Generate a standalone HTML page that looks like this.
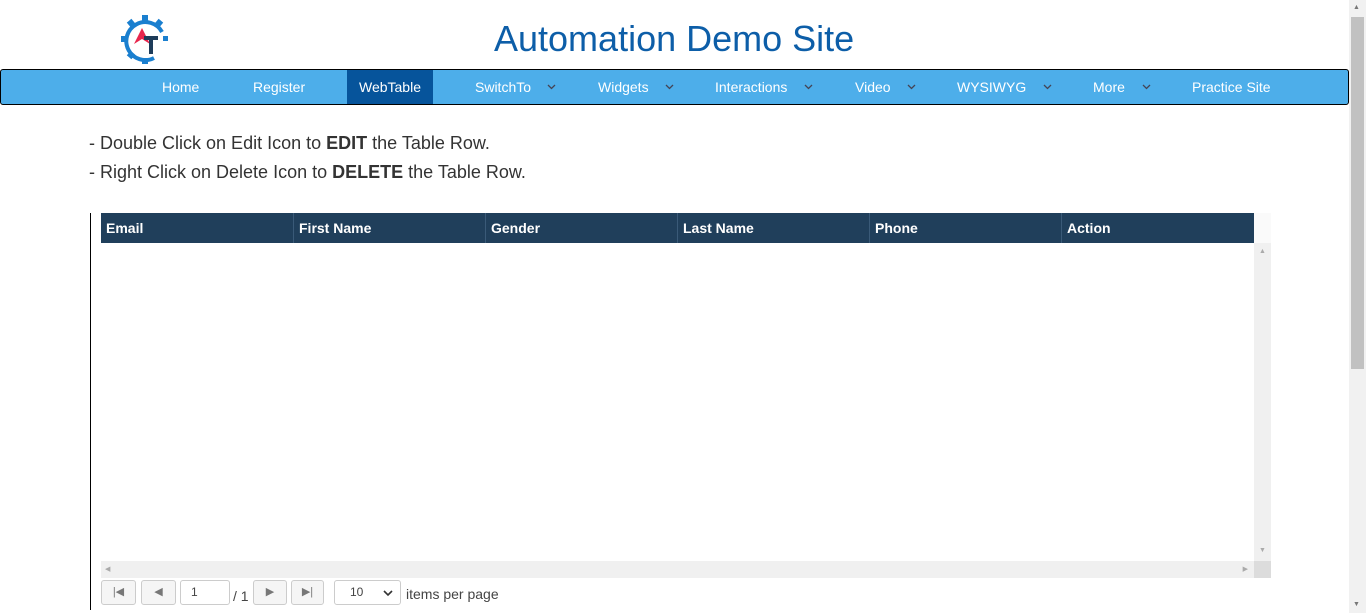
<!DOCTYPE html>
<html><head><style>
body{margin:0;width:1366px;height:613px;overflow:hidden;font-family:"Liberation Sans",sans-serif;background:#fff;position:relative}
.a{position:absolute}
.nav{left:0;top:69px;width:1347px;height:34px;background:#4daeea;border:1px solid #000;border-radius:3px}
.ni{position:absolute;top:0;height:34px;line-height:34px;color:#fff;font-size:14px}
.ch{position:absolute;top:14px}
.th{position:absolute;top:213px;height:30px;line-height:30px;color:#fff;font-weight:bold;font-size:14px;padding-left:5px;box-sizing:border-box;border-left:1px solid #3a5a78}
.btn{position:absolute;top:580px;height:25px;border:1px solid #ccc;border-radius:3px;background:#f5f5f5;box-sizing:border-box;color:#777;font-size:11px;text-align:center;line-height:23px}
</style></head><body>
<svg class="a" style="left:120px;top:14px" width="50" height="52" viewBox="0 0 50 52">
<g fill="none" stroke="#1a7fcf" stroke-width="4"><path d="M34 44 A19 19 0 1 1 42 18"/></g>
<g fill="#1a7fcf"><rect x="22" y="1" width="6" height="6"/><rect x="8" y="6" width="6" height="6" transform="rotate(-40 11 9)"/><rect x="36" y="6" width="6" height="6" transform="rotate(40 39 9)"/><rect x="1" y="22" width="6" height="6"/><rect x="8" y="38" width="6" height="6" transform="rotate(40 11 41)"/><rect x="22" y="44" width="6" height="6"/><rect x="43" y="22" width="5" height="5"/></g>
<path d="M14 30 L22 14 L30 30 L22 25Z" fill="#e8264d"/>
<path d="M24 22 H38 V26 H33 V40 H29 V26 H24Z" fill="#1e3c5a"/>
</svg>
<div class="a" style="left:494px;top:18px;font-size:36px;color:#0d5ea8">Automation Demo Site</div>
<div class="a nav">
<div class="ni" style="left:161px">Home</div>
<div class="ni" style="left:252px">Register</div>
<div class="ni" style="left:346px;width:86px;background:#06549b;text-align:center">WebTable</div>
<div class="ni" style="left:474px">SwitchTo</div><svg class="ch" style="left:546px" width="9" height="6"><polyline points="1,1 4.5,4.5 8,1" fill="none" stroke="#445" stroke-width="1.3"/></svg>
<div class="ni" style="left:597px">Widgets</div><svg class="ch" style="left:664px" width="9" height="6"><polyline points="1,1 4.5,4.5 8,1" fill="none" stroke="#445" stroke-width="1.3"/></svg>
<div class="ni" style="left:714px">Interactions</div><svg class="ch" style="left:803px" width="9" height="6"><polyline points="1,1 4.5,4.5 8,1" fill="none" stroke="#445" stroke-width="1.3"/></svg>
<div class="ni" style="left:854px">Video</div><svg class="ch" style="left:906px" width="9" height="6"><polyline points="1,1 4.5,4.5 8,1" fill="none" stroke="#445" stroke-width="1.3"/></svg>
<div class="ni" style="left:956px">WYSIWYG</div><svg class="ch" style="left:1042px" width="9" height="6"><polyline points="1,1 4.5,4.5 8,1" fill="none" stroke="#445" stroke-width="1.3"/></svg>
<div class="ni" style="left:1092px">More</div><svg class="ch" style="left:1141px" width="9" height="6"><polyline points="1,1 4.5,4.5 8,1" fill="none" stroke="#445" stroke-width="1.3"/></svg>
<div class="ni" style="left:1191px">Practice Site</div>
</div>
<div class="a" style="left:89px;top:133px;font-size:18px;color:#333">- Double Click on Edit Icon to <b>EDIT</b> the Table Row.</div>
<div class="a" style="left:89px;top:162px;font-size:18px;color:#333">- Right Click on Delete Icon to <b>DELETE</b> the Table Row.</div>
<div class="a" style="left:90px;top:213px;width:1px;height:397px;background:#000"></div>
<div class="a" style="left:101px;top:213px;width:1153px;height:30px;background:#203f5b"></div>
<div class="th" style="left:101px;width:192px;border:0">Email</div>
<div class="th" style="left:293px;width:192px">First Name</div>
<div class="th" style="left:485px;width:192px">Gender</div>
<div class="th" style="left:677px;width:192px">Last Name</div>
<div class="th" style="left:869px;width:192px">Phone</div>
<div class="th" style="left:1061px;width:193px">Action</div>
<div class="a" style="left:1254px;top:213px;width:17px;height:30px;background:#fafafa"></div>
<div class="a" style="left:1254px;top:243px;width:17px;height:318px;background:#f0f0f0;color:#aaa;font-size:7px;text-align:center"><div style="margin-top:5px">▲</div><div style="margin-top:292px">▼</div></div>
<div class="a" style="left:101px;top:561px;width:1153px;height:17px;background:#f0f0f0;color:#aaa;font-size:7px;line-height:17px"><span style="margin-left:4px">◀</span><span style="float:right;margin-right:6px">▶</span></div>
<div class="a" style="left:1254px;top:561px;width:17px;height:17px;background:#dcdcdc"></div>
<div class="btn" style="left:101px;width:35px">|◀</div>
<div class="btn" style="left:141px;width:35px">◀</div>
<div class="btn" style="left:180px;width:50px;background:#fff;text-align:left;padding-left:10px;color:#444;font-size:12px">1</div>
<div class="a" style="left:233px;top:588px;font-size:14px;color:#444">/ 1</div>
<div class="btn" style="left:253px;width:34px">▶</div>
<div class="btn" style="left:291px;width:33px">▶|</div>
<div class="btn" style="left:334px;width:67px;background:#fff;text-align:left;padding-left:15px;color:#444;font-size:12px">10<svg style="position:absolute;right:7px;top:9px" width="10" height="7"><polyline points="1,1 5,5 9,1" fill="none" stroke="#333" stroke-width="1.6"/></svg></div>
<div class="a" style="left:406px;top:586px;font-size:14px;color:#444">items per page</div>
<div class="a" style="left:1349px;top:0;width:17px;height:613px;background:#f1f1f1"></div>
<div class="a" style="left:1351px;top:17px;width:13px;height:352px;background:#c1c1c1"></div>
<div class="a" style="left:1353px;top:4px;font-size:7px;color:#777">▲</div>
<div class="a" style="left:1353px;top:601px;font-size:7px;color:#777">▼</div>
</body></html>
